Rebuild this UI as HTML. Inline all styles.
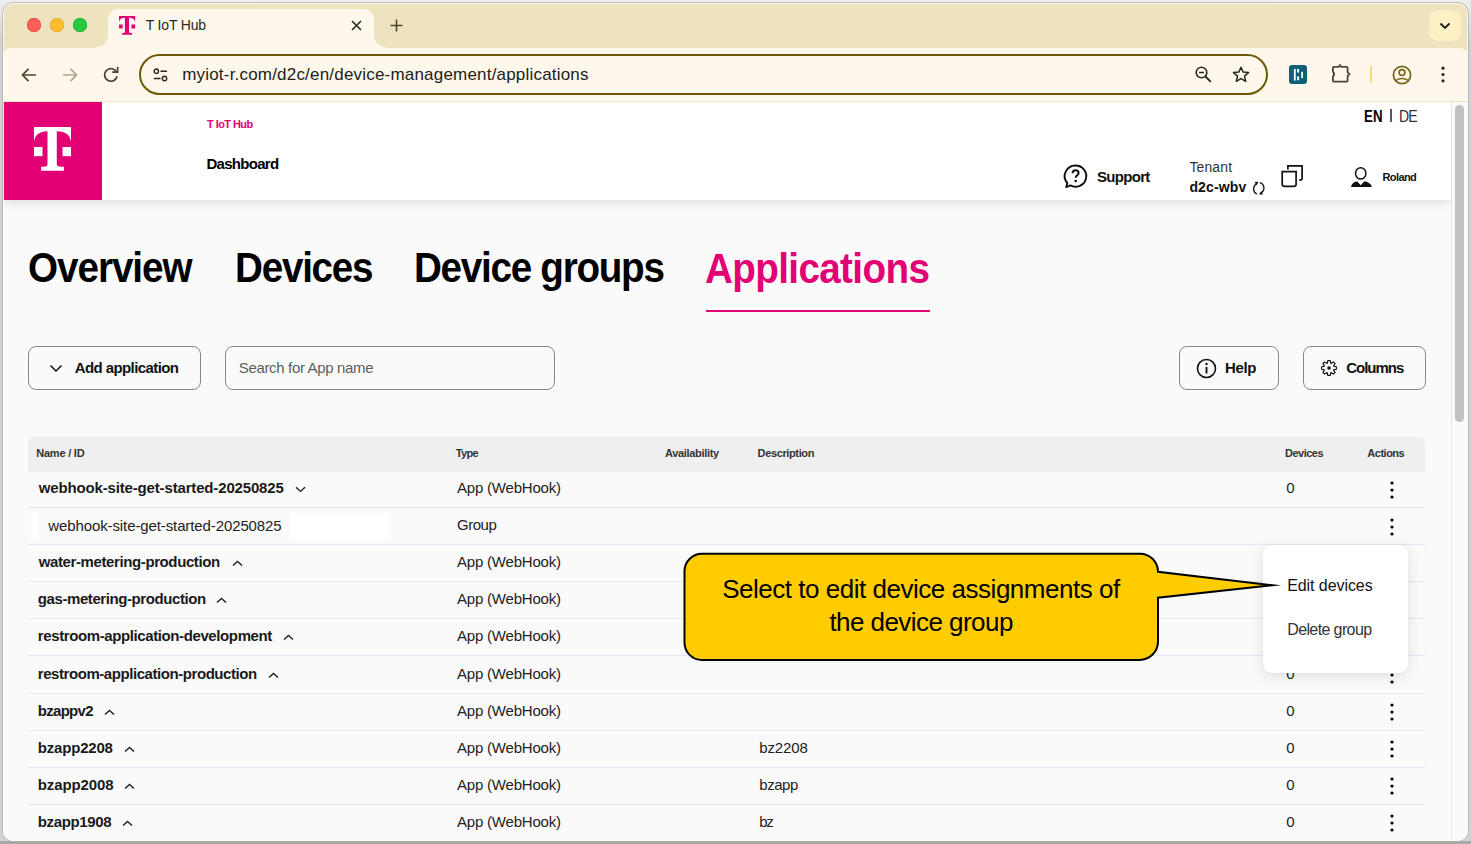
<!DOCTYPE html>
<html><head><meta charset="utf-8">
<style>
html,body{margin:0;padding:0}
body{width:1471px;height:844px;position:relative;overflow:hidden;background:linear-gradient(#eeeeee 0,#eeeeee 2px,#d2d2d2 40px);font-family:"Liberation Sans",sans-serif}
.t{position:absolute;white-space:nowrap;line-height:1;font-family:"Liberation Sans",sans-serif}
.ic{position:absolute;overflow:visible}
.abs{position:absolute}
#bgshadow{position:absolute;left:0;top:841px;width:1471px;height:3px;background:#a8a8a8}
#win{position:absolute;left:3px;top:3px;width:1465px;height:838px;border-radius:10px;overflow:hidden;background:#ede3bf;box-shadow:0 0 0 0.7px #acacac}
#winhl{position:absolute;left:3px;top:3px;width:1465px;height:838px;border-radius:10px;box-shadow:inset 0 0 0 1px rgba(255,253,240,0.85);pointer-events:none}
#tab{position:absolute;left:105px;top:6px;width:266px;height:40px;background:#fef8ec;border-radius:10px 10px 0 0}
#tabfootL{position:absolute;left:93px;top:32px;width:12px;height:13px;background:radial-gradient(circle at 0 0,#ede3bf 11.5px,#fef8ec 12.5px)}
#tabfootR{position:absolute;left:371px;top:32px;width:12px;height:13px;background:radial-gradient(circle at 100% 0,#ede3bf 11.5px,#fef8ec 12.5px)}
#toolbar{position:absolute;left:0;top:45px;width:1465px;height:53px;background:#fef8ec;border-radius:8px 8px 0 0}
#tbline{position:absolute;left:0;top:98px;width:1465px;height:1px;background:#ece4cc}
#url{position:absolute;left:136px;top:51px;width:1125px;height:37px;border:2.5px solid #6b5800;border-radius:21px;background:#fef8ec}
#page{position:absolute;left:0;top:99px;width:1448px;height:739px;background:#fafafa;overflow:hidden}
#hdr{position:absolute;left:0;top:0;width:1448px;height:98px;background:#fff;box-shadow:0 2px 10px rgba(0,0,0,0.13)}
#logo{position:absolute;left:0;top:0;width:99px;height:98px;background:#e20074}
#sb{position:absolute;left:1448px;top:99px;width:17px;height:739px;background:#fafafa;border-left:1px solid #e6e6e6;box-sizing:border-box}
#thumb{position:absolute;left:3px;top:3px;width:9px;height:317px;border-radius:5px;background:#c1c1c1}
.btn{position:absolute;top:346px;height:42px;border:1px solid #888;border-radius:8px;box-sizing:content-box}
#thead{position:absolute;left:25px;top:335px;width:1397px;height:35px;background:#efefef;border-radius:6px 6px 0 0}
.rb{position:absolute;left:28px;width:1397px;height:1px;background:#e3e8ef}
#menu{position:absolute;left:1263px;top:545px;width:145px;height:128px;background:#fff;border-radius:9px;box-shadow:0 3px 14px rgba(0,0,0,0.12)}
</style></head><body>
<div id="bgshadow"></div>
<div id="win">
  <!-- traffic lights -->
  <div class="abs" style="left:24px;top:15.2px;width:14px;height:14px;border-radius:50%;background:#fe5f57;box-shadow:inset 0 0 0 0.6px #e0443e"></div>
  <div class="abs" style="left:47px;top:15.2px;width:14px;height:14px;border-radius:50%;background:#febc2e;box-shadow:inset 0 0 0 0.6px #dea123"></div>
  <div class="abs" style="left:70px;top:15.2px;width:14px;height:14px;border-radius:50%;background:#28c840;box-shadow:inset 0 0 0 0.6px #1aab29"></div>
  <div id="tab"></div><div id="tabfootL"></div><div id="tabfootR"></div>
  <div id="toolbar"></div>
  <div id="tbline"></div>
  <!-- favicon -->
  <svg class="ic" style="left:115.8px;top:13px" width="16.2" height="18.7" viewBox="0 0 37 43.8" preserveAspectRatio="none">
    <path d="M0 0 H37 V15 C36 8 32 4.6 22.8 4.3 V37 C22.8 39 24.5 39.8 29.9 39.8 V43.8 H7.1 V39.8 C12.5 39.8 13.5 39 13.5 37 V4.3 C5 4.6 1 8 0 15 Z" fill="#e20074"/>
    <rect x="0" y="20" width="8.5" height="9.2" fill="#e20074"/><rect x="28.5" y="20" width="8.5" height="9.2" fill="#e20074"/>
  </svg>
  <!-- tab close -->
  <svg class="ic" style="left:348px;top:17px" width="11" height="11" viewBox="0 0 11 11"><path d="M1 1 L10 10 M10 1 L1 10" stroke="#2a2720" stroke-width="1.6"/></svg>
  <!-- new tab + -->
  <svg class="ic" style="left:387px;top:16px" width="13" height="13" viewBox="0 0 13 13"><path d="M6.5 0.5 V12.5 M0.5 6.5 H12.5" stroke="#4a4430" stroke-width="1.6"/></svg>
  <!-- tab search button -->
  <div class="abs" style="left:1426px;top:6.5px;width:32px;height:31px;border-radius:9px;background:#fdf0c4"></div>
  <svg class="ic" style="left:1436px;top:19px" width="12" height="8" viewBox="0 0 12 8"><path d="M1.5 1.5 L6 6 L10.5 1.5" fill="none" stroke="#1a1a1a" stroke-width="1.8"/></svg>
  <!-- back / fwd / reload -->
  <svg class="ic" style="left:18px;top:64px" width="16" height="16" viewBox="0 0 16 16"><path d="M15 8 H1.8 M7.5 1.8 L1.5 8 L7.5 14.2" fill="none" stroke="#4a4430" stroke-width="1.7"/></svg>
  <svg class="ic" style="left:59px;top:64px" width="16" height="16" viewBox="0 0 16 16"><path d="M1 8 H14.2 M8.5 1.8 L14.5 8 L8.5 14.2" fill="none" stroke="#aba48f" stroke-width="1.7"/></svg>
  <svg class="ic" style="left:100px;top:63px" width="16" height="17" viewBox="0 0 16 17"><path d="M13.8 6.6 A6.3 6.3 0 1 0 14.1 10.2" fill="none" stroke="#4a4430" stroke-width="1.7"/><path d="M9.2 6.2 H14.6 V0.8" fill="none" stroke="#4a4430" stroke-width="1.7"/></svg>
  <div id="url"></div>
  <!-- site settings icon -->
  <svg class="ic" style="left:150px;top:65px" width="15" height="14" viewBox="0 0 15 14"><circle cx="3.3" cy="3.2" r="2.2" fill="none" stroke="#2a2720" stroke-width="1.4"/><path d="M7.5 3.2 H14" stroke="#2a2720" stroke-width="1.4"/><circle cx="11.5" cy="10.5" r="2.2" fill="none" stroke="#2a2720" stroke-width="1.4"/><path d="M0.8 10.5 H7.5" stroke="#2a2720" stroke-width="1.4"/></svg>
  <div class="t" style="left:142.70px;top:15.20px;font-size:14px;font-weight:400;color:#2a2720;letter-spacing:-0.169px">T IoT Hub</div>
<div class="t" style="left:179.20px;top:63.20px;font-size:17px;font-weight:400;color:#22201a;letter-spacing:0.197px">myiot-r.com/d2c/en/device-management/applications</div>
  <!-- zoom icon -->
  <svg class="ic" style="left:1192px;top:63px" width="17" height="17" viewBox="0 0 17 17"><circle cx="6.5" cy="6.5" r="5.3" fill="none" stroke="#2a2720" stroke-width="1.6"/><path d="M4 6.5 H9" stroke="#2a2720" stroke-width="1.6"/><path d="M10.5 10.5 L15.8 15.8" stroke="#2a2720" stroke-width="1.8"/></svg>
  <!-- star -->
  <svg class="ic" style="left:1229px;top:63px" width="18" height="17" viewBox="0 0 18 17"><path d="M9 1.3 L11.2 6.1 L16.5 6.6 L12.5 10.1 L13.7 15.4 L9 12.6 L4.3 15.4 L5.5 10.1 L1.5 6.6 L6.8 6.1 Z" fill="none" stroke="#2a2720" stroke-width="1.5" stroke-linejoin="round"/></svg>
  <!-- teal extension -->
  <div class="abs" style="left:1286.2px;top:62px;width:18.2px;height:18.5px;border-radius:3px;background:#0e5f78"></div>
  <svg class="ic" style="left:1286.2px;top:62px" width="19" height="19" viewBox="0 0 19 19"><rect x="4.9" y="3.9" width="1.8" height="11.6" fill="#fff"/><rect x="8.2" y="4" width="1.9" height="3.6" fill="#fff"/><rect x="8.2" y="11.4" width="1.9" height="3.9" fill="#fff"/><rect x="12.3" y="6.8" width="1.7" height="6.3" fill="#fff"/></svg>
  <!-- puzzle -->
  <svg class="ic" style="left:1328.6px;top:63.4px" width="19" height="17" viewBox="0 0 19 17"><path d="M1.9 0.9 H6.8 L8 -1.1 L9.2 0.9 H14.6 Q15.6 0.9 15.6 1.9 V6.3 L17.6 8.1 L15.6 9.9 V14.6 Q15.6 15.6 14.6 15.6 H1.9 Q0.9 15.6 0.9 14.6 V10.6 Q3.4 8.1 0.9 5.6 V1.9 Q0.9 0.9 1.9 0.9 Z" fill="none" stroke="#4e4530" stroke-width="1.8" stroke-linejoin="round"/></svg>
  <div class="abs" style="left:1366.5px;top:62.5px;width:2.2px;height:17.5px;background:#f8db7c"></div>
  <!-- profile -->
  <svg class="ic" style="left:1389px;top:62px" width="20" height="20" viewBox="0 0 20 20"><circle cx="10" cy="10" r="8.6" fill="none" stroke="#7a6619" stroke-width="1.8"/><circle cx="10" cy="7.6" r="2.9" fill="none" stroke="#7a6619" stroke-width="1.7"/><path d="M4.3 15.6 C6 12.8 14 12.8 15.7 15.6" fill="none" stroke="#7a6619" stroke-width="1.7"/></svg>
  <!-- kebab -->
  <svg class="ic" style="left:1437px;top:63px" width="6" height="17" viewBox="0 0 6 17"><circle cx="3" cy="2.2" r="1.6" fill="#2a2720"/><circle cx="3" cy="8.5" r="1.6" fill="#2a2720"/><circle cx="3" cy="14.8" r="1.6" fill="#2a2720"/></svg>

  <div id="page">
    <div id="hdr"></div>
    <div id="logo"></div>
    <svg class="ic" style="left:31px;top:25px" width="38" height="45" viewBox="0 0 38 45">
      <path d="M0 0 H37 V15 C36 8 32 4.6 22.8 4.3 V37 C22.8 39 24.5 39.8 29.9 39.8 V43.8 H7.1 V39.8 C12.5 39.8 13.5 39 13.5 37 V4.3 C5 4.6 1 8 0 15 Z" fill="#fff"/>
      <rect x="0" y="20" width="8.5" height="9.2" fill="#fff"/><rect x="28.5" y="20" width="8.5" height="9.2" fill="#fff"/>
    </svg>
  </div>
  <div id="sb"><div id="thumb"></div></div>
</div>
<div id="winhl"></div>
<!-- page-level elements in body coordinates -->
<div class="abs" style="left:1390.2px;top:109.2px;width:1.6px;height:13.2px;background:#555"></div>
<!-- support icon -->
<svg class="ic" style="left:1063px;top:164px" width="25" height="25" viewBox="0 0 25 25"><path d="M12.5 1.5 A10.8 10.6 0 1 1 7.3 21.4 L3.2 23.2 L4.3 19 A10.8 10.6 0 0 1 12.5 1.5 Z" fill="none" stroke="#111" stroke-width="1.9" stroke-linejoin="round"/><path d="M9.6 9.3 C9.6 7.3 11 6.2 12.6 6.2 C14.4 6.2 15.6 7.4 15.6 9 C15.6 11.2 12.7 11.4 12.7 13.8" fill="none" stroke="#111" stroke-width="2"/><circle cx="12.7" cy="17" r="1.3" fill="#111"/></svg>
<!-- tenant refresh -->
<svg class="ic" style="left:1252px;top:181px" width="14" height="15" viewBox="0 0 14 15"><path d="M4.3 3 A5.6 5.6 0 0 0 4.8 12.9" fill="none" stroke="#111" stroke-width="1.3"/><path d="M7.8 1.6 A5.6 5.6 0 0 1 9.2 11.8" fill="none" stroke="#111" stroke-width="1.3"/><path d="M2.6 1 L6.4 0.8 L4.6 4.6 Z" fill="#111"/><path d="M10.9 13.6 L7 13.6 L9.3 10 Z" fill="#111"/></svg>
<!-- copy icon -->
<svg class="ic" style="left:1281px;top:164px" width="23" height="24" viewBox="0 0 23 24"><path d="M1.2 7.6 H15.1 V20.2 C15.1 21.6 14.2 22.3 12.8 22.3 H3.5 C2.1 22.3 1.2 21.6 1.2 20.2 Z" fill="none" stroke="#111" stroke-width="1.7"/><path d="M6.9 5.6 V1.9 H21.1 V14.6 C21.1 15.6 20.3 16.2 19 16.2 H18.2" fill="none" stroke="#111" stroke-width="1.7"/></svg>
<!-- person icon -->
<svg class="ic" style="left:1350px;top:166px" width="23" height="22" viewBox="0 0 23 22"><ellipse cx="10.7" cy="7.4" rx="5.15" ry="5.7" fill="none" stroke="#111" stroke-width="1.5"/><path d="M1 20.9 C1.8 17.5 4 15.6 7.3 15.6 L10.7 19.3 L14.1 15.6 C17.6 15.6 21 17.5 21.8 20.9 Z" fill="#111"/></svg>
<div id="thead" style="left:28px;top:437px"></div>
<div class="t" style="left:207.00px;top:119.20px;font-size:11px;font-weight:700;color:#e20074;letter-spacing:-0.561px">T IoT Hub</div>
<div class="t" style="left:206.40px;top:156.30px;font-size:15px;font-weight:700;color:#000;letter-spacing:-0.711px">Dashboard</div>
<div class="t" style="left:1363.87px;top:108.80px;font-size:16px;font-weight:700;color:#000;letter-spacing:0.171px;transform:scaleX(0.83);transform-origin:0 0">EN</div>
<div class="t" style="left:1399.32px;top:108.80px;font-size:16px;font-weight:400;color:#333;letter-spacing:-1.009px;transform:scaleX(0.88);transform-origin:0 0">DE</div>
<div class="t" style="left:1096.90px;top:169.00px;font-size:15px;font-weight:700;color:#111;letter-spacing:-0.682px">Support</div>
<div class="t" style="left:1189.40px;top:159.80px;font-size:14px;font-weight:400;color:#333;letter-spacing:0.131px">Tenant</div>
<div class="t" style="left:1189.40px;top:180.00px;font-size:14px;font-weight:700;color:#111;letter-spacing:0.145px">d2c-wbv</div>
<div class="t" style="left:1382.50px;top:171.90px;font-size:11px;font-weight:700;color:#111;letter-spacing:-0.611px">Roland</div>
<div class="t" style="left:27.88px;top:247.10px;font-size:42px;font-weight:700;color:#000;letter-spacing:-1.138px;transform:scaleX(0.92);transform-origin:0 0">Overview</div>
<div class="t" style="left:234.76px;top:246.90px;font-size:42px;font-weight:700;color:#000;letter-spacing:-1.358px;transform:scaleX(0.92);transform-origin:0 0">Devices</div>
<div class="t" style="left:414.36px;top:246.90px;font-size:42px;font-weight:700;color:#000;letter-spacing:-1.393px;transform:scaleX(0.92);transform-origin:0 0">Device groups</div>
<div class="t" style="left:705.08px;top:247.50px;font-size:42px;font-weight:700;color:#e20074;letter-spacing:-0.691px;transform:scaleX(0.92);transform-origin:0 0">Applications</div>
<div class="t" style="left:74.70px;top:360.00px;font-size:15px;font-weight:700;color:#111;letter-spacing:-0.588px">Add application</div>
<div class="t" style="left:238.80px;top:359.80px;font-size:15px;font-weight:400;color:#5e5e5e;letter-spacing:-0.345px">Search for App name</div>
<div class="t" style="left:1225.00px;top:360.20px;font-size:15px;font-weight:700;color:#111;letter-spacing:-0.347px">Help</div>
<div class="t" style="left:1346.20px;top:360.20px;font-size:15px;font-weight:700;color:#111;letter-spacing:-1.004px">Columns</div>
<div class="t" style="left:36.20px;top:447.90px;font-size:11px;font-weight:700;color:#333;letter-spacing:-0.211px">Name / ID</div>
<div class="t" style="left:455.80px;top:447.90px;font-size:11px;font-weight:700;color:#333;letter-spacing:-0.647px">Type</div>
<div class="t" style="left:665.10px;top:447.90px;font-size:11px;font-weight:700;color:#333;letter-spacing:-0.332px">Availability</div>
<div class="t" style="left:757.60px;top:447.90px;font-size:11px;font-weight:700;color:#333;letter-spacing:-0.369px">Description</div>
<div class="t" style="left:1285.00px;top:447.90px;font-size:11px;font-weight:700;color:#333;letter-spacing:-0.512px">Devices</div>
<div class="t" style="left:1367.30px;top:447.90px;font-size:11px;font-weight:700;color:#333;letter-spacing:-0.487px">Actions</div>
<div class="t" style="left:38.80px;top:480.00px;font-size:15px;font-weight:700;color:#1a1a1a;letter-spacing:-0.158px">webhook-site-get-started-20250825</div>
<div class="t" style="left:457.00px;top:480.00px;font-size:15px;font-weight:400;color:#222;letter-spacing:-0.203px">App (WebHook)</div>
<div class="t" style="left:1286.20px;top:480.00px;font-size:15px;font-weight:400;color:#222;letter-spacing:0.000px">0</div>
<div class="t" style="left:48.30px;top:517.80px;font-size:15px;font-weight:400;color:#222;letter-spacing:-0.108px">webhook-site-get-started-20250825</div>
<div class="t" style="left:457.00px;top:517.10px;font-size:15px;font-weight:400;color:#222;letter-spacing:-0.487px">Group</div>
<div class="t" style="left:38.80px;top:554.20px;font-size:15px;font-weight:700;color:#1a1a1a;letter-spacing:-0.395px">water-metering-production</div>
<div class="t" style="left:457.00px;top:554.20px;font-size:15px;font-weight:400;color:#222;letter-spacing:-0.203px">App (WebHook)</div>
<div class="t" style="left:1286.20px;top:554.20px;font-size:15px;font-weight:400;color:#222;letter-spacing:0.000px">0</div>
<div class="t" style="left:37.80px;top:591.30px;font-size:15px;font-weight:700;color:#1a1a1a;letter-spacing:-0.415px">gas-metering-production</div>
<div class="t" style="left:457.00px;top:591.30px;font-size:15px;font-weight:400;color:#222;letter-spacing:-0.203px">App (WebHook)</div>
<div class="t" style="left:1286.20px;top:591.30px;font-size:15px;font-weight:400;color:#222;letter-spacing:0.000px">0</div>
<div class="t" style="left:37.80px;top:628.40px;font-size:15px;font-weight:700;color:#1a1a1a;letter-spacing:-0.394px">restroom-application-development</div>
<div class="t" style="left:457.00px;top:628.40px;font-size:15px;font-weight:400;color:#222;letter-spacing:-0.203px">App (WebHook)</div>
<div class="t" style="left:1286.20px;top:628.40px;font-size:15px;font-weight:400;color:#222;letter-spacing:0.000px">0</div>
<div class="t" style="left:37.80px;top:665.50px;font-size:15px;font-weight:700;color:#1a1a1a;letter-spacing:-0.438px">restroom-application-production</div>
<div class="t" style="left:457.00px;top:665.50px;font-size:15px;font-weight:400;color:#222;letter-spacing:-0.203px">App (WebHook)</div>
<div class="t" style="left:1286.20px;top:665.50px;font-size:15px;font-weight:400;color:#222;letter-spacing:0.000px">0</div>
<div class="t" style="left:37.80px;top:702.60px;font-size:15px;font-weight:700;color:#1a1a1a;letter-spacing:-0.712px">bzappv2</div>
<div class="t" style="left:457.00px;top:702.60px;font-size:15px;font-weight:400;color:#222;letter-spacing:-0.203px">App (WebHook)</div>
<div class="t" style="left:1286.20px;top:702.60px;font-size:15px;font-weight:400;color:#222;letter-spacing:0.000px">0</div>
<div class="t" style="left:37.80px;top:739.70px;font-size:15px;font-weight:700;color:#1a1a1a;letter-spacing:-0.195px">bzapp2208</div>
<div class="t" style="left:457.00px;top:739.70px;font-size:15px;font-weight:400;color:#222;letter-spacing:-0.203px">App (WebHook)</div>
<div class="t" style="left:759.30px;top:739.70px;font-size:15px;font-weight:400;color:#222;letter-spacing:-0.134px">bz2208</div>
<div class="t" style="left:1286.20px;top:739.70px;font-size:15px;font-weight:400;color:#222;letter-spacing:0.000px">0</div>
<div class="t" style="left:37.80px;top:776.80px;font-size:15px;font-weight:700;color:#1a1a1a;letter-spacing:-0.120px">bzapp2008</div>
<div class="t" style="left:457.00px;top:776.80px;font-size:15px;font-weight:400;color:#222;letter-spacing:-0.203px">App (WebHook)</div>
<div class="t" style="left:759.30px;top:776.80px;font-size:15px;font-weight:400;color:#222;letter-spacing:-0.457px">bzapp</div>
<div class="t" style="left:1286.20px;top:776.80px;font-size:15px;font-weight:400;color:#222;letter-spacing:0.000px">0</div>
<div class="t" style="left:37.80px;top:813.90px;font-size:15px;font-weight:700;color:#1a1a1a;letter-spacing:-0.370px">bzapp1908</div>
<div class="t" style="left:457.00px;top:813.90px;font-size:15px;font-weight:400;color:#222;letter-spacing:-0.203px">App (WebHook)</div>
<div class="t" style="left:759.30px;top:813.90px;font-size:15px;font-weight:400;color:#222;letter-spacing:-1.442px">bz</div>
<div class="t" style="left:1286.20px;top:813.90px;font-size:15px;font-weight:400;color:#222;letter-spacing:0.000px">0</div>
<!-- tab underline -->
<div class="abs" style="left:706px;top:309.5px;width:224px;height:2px;background:#e20074"></div>
<!-- buttons -->
<div class="btn" style="left:28px;width:171px"></div>
<div class="btn" style="left:225px;width:328px"></div>
<div class="btn" style="left:1179px;width:98px"></div>
<div class="btn" style="left:1303px;width:121px"></div>
<svg class="ic" style="left:49px;top:364px" width="14" height="9" viewBox="0 0 14 9"><path d="M1.5 1.5 L7 7 L12.5 1.5" fill="none" stroke="#111" stroke-width="1.5"/></svg>
<svg class="ic" style="left:1196px;top:358px" width="21" height="21" viewBox="0 0 21 21"><circle cx="10.5" cy="10.5" r="9" fill="none" stroke="#111" stroke-width="1.6"/><path d="M10.5 9 V15.5" stroke="#111" stroke-width="1.9"/><circle cx="10.5" cy="6" r="1.2" fill="#111"/></svg>
<svg class="ic" style="left:1320.3px;top:359px" width="18" height="18" viewBox="0 0 18 18"><path d="M7.24 4.32 L7.73 1.61 L10.27 1.61 L10.76 4.32 L11.06 4.45 L13.33 2.88 L15.12 4.67 L13.55 6.94 L13.68 7.24 L16.39 7.73 L16.39 10.27 L13.68 10.76 L13.55 11.06 L15.12 13.33 L13.33 15.12 L11.06 13.55 L10.76 13.68 L10.27 16.39 L7.73 16.39 L7.24 13.68 L6.94 13.55 L4.67 15.12 L2.88 13.33 L4.45 11.06 L4.32 10.76 L1.61 10.27 L1.61 7.73 L4.32 7.24 L4.45 6.94 L2.88 4.67 L4.67 2.88 L6.94 4.45 Z" fill="none" stroke="#111" stroke-width="1.15" stroke-linejoin="round"/><circle cx="9" cy="9" r="1.8" fill="#111"/></svg>
<!-- table -->
<div class="rb" style="top:507.0px"></div>
<div class="rb" style="top:544.1px"></div>
<div class="rb" style="top:581.2px"></div>
<div class="rb" style="top:618.3px"></div>
<div class="rb" style="top:655.4px"></div>
<div class="rb" style="top:692.5px"></div>
<div class="rb" style="top:729.6px"></div>
<div class="rb" style="top:766.7px"></div>
<div class="rb" style="top:803.8px"></div>
<div style="position:absolute;left:31px;top:513px;width:7px;height:27px;background:#fff"></div>
<div style="position:absolute;left:290px;top:513px;width:99px;height:27px;background:#fff"></div>
<svg class="ic" style="left:294.7px;top:486.0px" width="11" height="7" viewBox="0 0 11 7"><path d="M1 1.2 L5.5 5.4 L10 1.2" fill="none" stroke="#222" stroke-width="1.4"/></svg>
<svg class="ic" style="left:1389px;top:479.5px" width="6" height="20" viewBox="0 0 6 20"><circle cx="3" cy="3" r="1.6" fill="#000"/><circle cx="3" cy="10" r="1.6" fill="#000"/><circle cx="3" cy="17" r="1.6" fill="#000"/></svg>
<svg class="ic" style="left:1389px;top:516.6px" width="6" height="20" viewBox="0 0 6 20"><circle cx="3" cy="3" r="1.6" fill="#000"/><circle cx="3" cy="10" r="1.6" fill="#000"/><circle cx="3" cy="17" r="1.6" fill="#000"/></svg>
<svg class="ic" style="left:231.7px;top:560.2px" width="11" height="7" viewBox="0 0 11 7"><path d="M1 5.6 L5.5 1.4 L10 5.6" fill="none" stroke="#222" stroke-width="1.4"/></svg>
<svg class="ic" style="left:1389px;top:553.7px" width="6" height="20" viewBox="0 0 6 20"><circle cx="3" cy="3" r="1.6" fill="#000"/><circle cx="3" cy="10" r="1.6" fill="#000"/><circle cx="3" cy="17" r="1.6" fill="#000"/></svg>
<svg class="ic" style="left:216.4px;top:597.3px" width="11" height="7" viewBox="0 0 11 7"><path d="M1 5.6 L5.5 1.4 L10 5.6" fill="none" stroke="#222" stroke-width="1.4"/></svg>
<svg class="ic" style="left:1389px;top:590.8px" width="6" height="20" viewBox="0 0 6 20"><circle cx="3" cy="3" r="1.6" fill="#000"/><circle cx="3" cy="10" r="1.6" fill="#000"/><circle cx="3" cy="17" r="1.6" fill="#000"/></svg>
<svg class="ic" style="left:283.3px;top:634.4px" width="11" height="7" viewBox="0 0 11 7"><path d="M1 5.6 L5.5 1.4 L10 5.6" fill="none" stroke="#222" stroke-width="1.4"/></svg>
<svg class="ic" style="left:1389px;top:627.9px" width="6" height="20" viewBox="0 0 6 20"><circle cx="3" cy="3" r="1.6" fill="#000"/><circle cx="3" cy="10" r="1.6" fill="#000"/><circle cx="3" cy="17" r="1.6" fill="#000"/></svg>
<svg class="ic" style="left:268.0px;top:671.5px" width="11" height="7" viewBox="0 0 11 7"><path d="M1 5.6 L5.5 1.4 L10 5.6" fill="none" stroke="#222" stroke-width="1.4"/></svg>
<svg class="ic" style="left:1389px;top:665.0px" width="6" height="20" viewBox="0 0 6 20"><circle cx="3" cy="3" r="1.6" fill="#000"/><circle cx="3" cy="10" r="1.6" fill="#000"/><circle cx="3" cy="17" r="1.6" fill="#000"/></svg>
<svg class="ic" style="left:104.2px;top:708.6px" width="11" height="7" viewBox="0 0 11 7"><path d="M1 5.6 L5.5 1.4 L10 5.6" fill="none" stroke="#222" stroke-width="1.4"/></svg>
<svg class="ic" style="left:1389px;top:702.1px" width="6" height="20" viewBox="0 0 6 20"><circle cx="3" cy="3" r="1.6" fill="#000"/><circle cx="3" cy="10" r="1.6" fill="#000"/><circle cx="3" cy="17" r="1.6" fill="#000"/></svg>
<svg class="ic" style="left:124.2px;top:745.7px" width="11" height="7" viewBox="0 0 11 7"><path d="M1 5.6 L5.5 1.4 L10 5.6" fill="none" stroke="#222" stroke-width="1.4"/></svg>
<svg class="ic" style="left:1389px;top:739.2px" width="6" height="20" viewBox="0 0 6 20"><circle cx="3" cy="3" r="1.6" fill="#000"/><circle cx="3" cy="10" r="1.6" fill="#000"/><circle cx="3" cy="17" r="1.6" fill="#000"/></svg>
<svg class="ic" style="left:124.2px;top:782.8px" width="11" height="7" viewBox="0 0 11 7"><path d="M1 5.6 L5.5 1.4 L10 5.6" fill="none" stroke="#222" stroke-width="1.4"/></svg>
<svg class="ic" style="left:1389px;top:776.3px" width="6" height="20" viewBox="0 0 6 20"><circle cx="3" cy="3" r="1.6" fill="#000"/><circle cx="3" cy="10" r="1.6" fill="#000"/><circle cx="3" cy="17" r="1.6" fill="#000"/></svg>
<svg class="ic" style="left:121.9px;top:819.9px" width="11" height="7" viewBox="0 0 11 7"><path d="M1 5.6 L5.5 1.4 L10 5.6" fill="none" stroke="#222" stroke-width="1.4"/></svg>
<svg class="ic" style="left:1389px;top:813.4px" width="6" height="20" viewBox="0 0 6 20"><circle cx="3" cy="3" r="1.6" fill="#000"/><circle cx="3" cy="10" r="1.6" fill="#000"/><circle cx="3" cy="17" r="1.6" fill="#000"/></svg>
<div id="menu"></div>
<div class="t" style="left:1287.20px;top:577.50px;font-size:16px;font-weight:400;color:#111;letter-spacing:-0.070px">Edit devices</div>
<div class="t" style="left:1287.20px;top:622.10px;font-size:16px;font-weight:400;color:#333;letter-spacing:-0.611px">Delete group</div>
<!-- callout -->
<svg class="ic" style="left:0;top:0" width="1471" height="844" viewBox="0 0 1471 844"><path d="M702.5 553.8 H1140 A18 18 0 0 1 1158 571.8 L1272.5 585.3 L1158 597.7 V641.5 A18.5 18.5 0 0 1 1139.5 660 H702 A17.5 17.5 0 0 1 684.5 642.5 V571.3 A17.5 17.5 0 0 1 702.5 553.8 Z" fill="#ffcc00" stroke="#000" stroke-width="2" stroke-linejoin="miter" stroke-miterlimit="20"/></svg>
<div class="t" style="left:722.20px;top:575.70px;font-size:26px;font-weight:400;color:#000;letter-spacing:-0.479px">Select to edit device assignments of</div>
<div class="t" style="left:829.40px;top:609.30px;font-size:26px;font-weight:400;color:#000;letter-spacing:-0.552px">the device group</div>
</body></html>
